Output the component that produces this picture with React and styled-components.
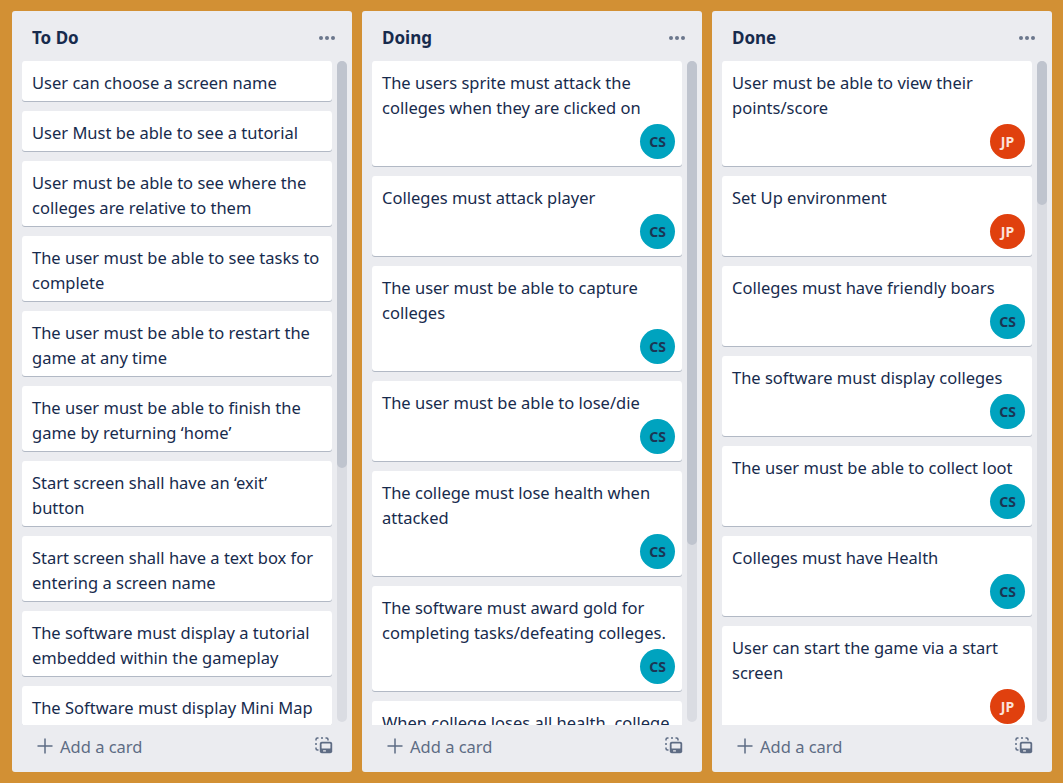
import React from "react";
import styled, { createGlobalStyle } from "styled-components";

const GlobalStyle = createGlobalStyle`
  html, body { margin: 0; padding: 0; }
  body {
    background: #d29034;
    font-family: "Noto Sans", "Open Sans", sans-serif;
    -webkit-font-smoothing: antialiased;
  }
`;

const Board = styled.div`
  display: flex;
  align-items: flex-start;
  gap: 10px;
  padding: 11px 12px;
  height: 783px;
  box-sizing: border-box;
`;

const List = styled.section`
  flex-shrink: 0;
  width: 340px;
  height: 761px;
  background: #ebecf0;
  border-radius: 3px;
  display: flex;
  flex-direction: column;
`;

const Header = styled.header`
  height: 50px;
  box-sizing: border-box;
  padding: 3px 17px 0 20px;
  display: flex;
  align-items: center;
  justify-content: space-between;
`;

const Title = styled.h2`
  margin: 0;
  font-size: 17px;
  font-weight: 700;
  color: #172b4d;
`;

const Dots = styled.span`
  display: flex;
  gap: 2px;
`;

const Dot = styled.span`
  width: 4px;
  height: 4px;
  border-radius: 50%;
  background: #6b778c;
`;

const Body = styled.div`
  flex: 1;
  min-height: 0;
  display: flex;
  gap: 5px;
  padding: 0 5px 0 10px;
`;

const Cards = styled.div`
  width: 310px;
  flex-shrink: 0;
  overflow: hidden;
  display: flex;
  flex-direction: column;
  gap: 10px;
`;

const Track = styled.div`
  width: 10px;
  margin-bottom: 3px;
  border-radius: 5px;
  background: #dadce2;
`;

const Thumb = styled.div`
  height: ${(p) => p.$size}px;
  border-radius: 5px;
  background: #bfc4ce;
`;

const Card = styled.article`
  flex-shrink: 0;
  background: #fff;
  border-radius: 3px;
  box-shadow: 0 1px 0 rgba(9, 30, 66, 0.25);
  padding: 9px 10px 6px;
`;

const CardText = styled.div`
  font-size: 16.5px;
  line-height: 25px;
  color: #172b4d;
`;

const Members = styled.div`
  display: flex;
  justify-content: flex-end;
  margin: 4px -3px 1px 0;
`;

const Avatar = styled.span`
  width: 35px;
  height: 35px;
  border-radius: 50%;
  background: ${(p) => p.$bg};
  color: ${(p) => p.$fg};
  font-size: 14px;
  font-weight: 700;
  display: flex;
  align-items: center;
  justify-content: center;
`;

const Footer = styled.footer`
  height: 47px;
  box-sizing: border-box;
  padding: 0 19px 5px 25px;
  display: flex;
  align-items: center;
  justify-content: space-between;
  color: #5e6c84;
`;

const AddButton = styled.span`
  display: flex;
  align-items: center;
  gap: 7px;
  font-size: 16.5px;
  line-height: 25px;
`;

const IconBox = styled.span`
  display: flex;
  color: #5e6c84;
`;

const PEOPLE = {
  CS: { bg: "#00a3bf", fg: "#1b3554" },
  JP: { bg: "#e0400e", fg: "#fbe3dc" },
};

const lists = [
  {
    title: "To Do",
    thumb: 407,
    cards: [
      ["User can choose a screen name"],
      ["User Must be able to see a tutorial"],
      ["User must be able to see where the colleges are relative to them"],
      ["The user must be able to see tasks to complete"],
      ["The user must be able to restart the game at any time"],
      ["The user must be able to finish the game by returning \u2018home\u2019"],
      ["Start screen shall have an \u2018exit\u2019 button"],
      ["Start screen shall have a text box for entering a screen name"],
      ["The software must display a tutorial embedded within the gameplay"],
      ["The Software must display Mini Map"],
    ],
  },
  {
    title: "Doing",
    thumb: 484,
    cards: [
      ["The users sprite must attack the colleges when they are clicked on", "CS"],
      ["Colleges must attack player", "CS"],
      ["The user must be able to capture colleges", "CS"],
      ["The user must be able to lose/die", "CS"],
      ["The college must lose health when attacked", "CS"],
      ["The software must award gold for completing tasks/defeating colleges.", "CS"],
      ["When college loses all health, college becomes an ally", "CS"],
    ],
  },
  {
    title: "Done",
    thumb: 144,
    cards: [
      ["User must be able to view their points/score", "JP"],
      ["Set Up environment", "JP"],
      ["Colleges must have friendly boars", "CS"],
      ["The software must display colleges", "CS"],
      ["The user must be able to collect loot", "CS"],
      ["Colleges must have Health", "CS"],
      ["User can start the game via a start screen", "JP"],
    ],
  },
];

function PlusIcon() {
  return (
    <svg width="16" height="16" viewBox="0 0 16 16" aria-hidden="true">
      <path d="M8 0.5v15M0.5 8h15" stroke="currentColor" strokeWidth="1.5" fill="none" />
    </svg>
  );
}

function TemplateIcon() {
  return (
    <svg width="18" height="18" viewBox="0 0 18 18" aria-hidden="true">
      <path
        d="M1 3.5v-1a1.5 1.5 0 0 1 1.5-1.5h1M6 1h2M10.5 1h1a1.5 1.5 0 0 1 1.5 1.5v1M1 6v2M1 10.5v1a1.5 1.5 0 0 0 1.5 1.5h1"
        fill="none"
        stroke="currentColor"
        strokeWidth="1.5"
      />
      <rect x="4.8" y="4.8" width="12.4" height="11.4" rx="2" fill="currentColor" />
      <rect x="6.6" y="6.6" width="8.8" height="5" rx="0.6" fill="#ebecf0" />
      <rect x="8" y="13.2" width="3" height="1.4" rx="0.5" fill="#ebecf0" />
    </svg>
  );
}

export default function App() {
  return (
    <>
      <GlobalStyle />
      <Board>
        {lists.map((list) => (
          <List key={list.title}>
            <Header>
              <Title>{list.title}</Title>
              <Dots>
                <Dot />
                <Dot />
                <Dot />
              </Dots>
            </Header>
            <Body>
              <Cards>
                {list.cards.map(([text, who], i) => (
                  <Card key={i}>
                    <CardText>{text}</CardText>
                    {who && (
                      <Members>
                        <Avatar $bg={PEOPLE[who].bg} $fg={PEOPLE[who].fg}>{who}</Avatar>
                      </Members>
                    )}
                  </Card>
                ))}
              </Cards>
              <Track>
                <Thumb $size={list.thumb} />
              </Track>
            </Body>
            <Footer>
              <AddButton>
                <PlusIcon />
                Add a card
              </AddButton>
              <IconBox>
                <TemplateIcon />
              </IconBox>
            </Footer>
          </List>
        ))}
      </Board>
    </>
  );
}
